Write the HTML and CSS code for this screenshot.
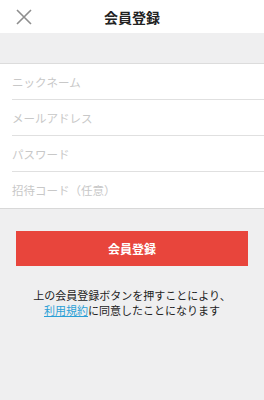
FILE: index.html
```html
<!DOCTYPE html>
<html lang="ja">
<head>
<meta charset="utf-8">
<link rel="stylesheet" href="styles.css">
</head>
<body>
<div class="header">
  <svg class="close" width="16" height="16" viewBox="0 0 16 16"><path d="M1 1L15 15M15 1L1 15" stroke="#8e8e8e" stroke-width="1.6" fill="none"/></svg>
  <div class="title">会員登録</div>
</div>
<div class="band"></div>
<div class="form">
  <div class="row"><span>ニックネーム</span></div>
  <div class="row"><span>メールアドレス</span></div>
  <div class="row"><span>パスワード</span></div>
  <div class="row last"><span>招待コード（任意）</span></div>
</div>
<div class="actions">
  <button class="btn">会員登録</button>
  <p class="note"><span class="line">上の会員登録ボタンを押すことにより、</span><span class="line"><a class="link">利用規約</a>に同意したことになります</span></p>
</div>
</body>
</html>
```
FILE: styles.css
```css
html, body { margin: 0; padding: 0; }
body {
  width: 264px; height: 400px;
  background: #efeff0;
  font-family: "Noto Sans CJK JP", "Noto Sans", sans-serif;
  overflow: hidden;
}
.header {
  height: 33px;
  background: #fff;
  position: relative;
  display: flex;
  align-items: center;
  justify-content: center;
}
.close { position: absolute; left: 16px; top: 9px; }
.title { font-size: 14px; font-weight: 700; color: #222; line-height: 1; }
.band { height: 30px; border-bottom: 1px solid #dcdcdc; }
.form { background: #fff; border-bottom: 1px solid #d8d8d8; }
.row {
  height: 35px;
  margin-left: 12px;
  border-bottom: 1px solid #e0e0e0;
  display: flex; align-items: center;
  font-size: 11.5px; color: #c8c8c8;
}
.row.last { border-bottom: none; height: 36px; }
.actions { padding: 22px 16px 0; display: flex; flex-direction: column; align-items: center; }
.btn {
  width: 232px; height: 35px;
  background: #e8453c; border: none; color: #fff;
  font-family: inherit; font-size: 12px; font-weight: 700;
  padding: 0;
}
.note {
  margin: 22px 0 0;
  font-size: 11px; line-height: 15px; color: #222; text-align: center;
  display: flex; flex-direction: column; align-items: center;
}
.line { display: block; white-space: nowrap; }
.link { color: #2a9fd6; text-decoration: underline; }
```
